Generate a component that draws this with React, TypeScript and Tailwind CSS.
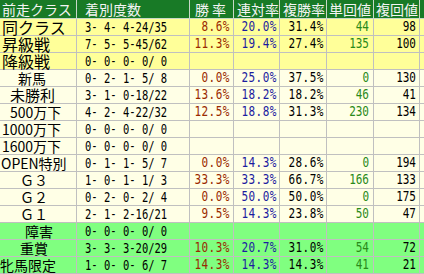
import React from "react";

type Row = {
  label: string;
  labelCls: string;
  bg: string;
  rec: string;
  w?: string;
  r?: string;
  f?: string;
  t?: string;
  fk?: string;
};

const Y = "bg-[#ffff99]";
const C = "bg-[#ffffe6]";
const G = "bg-[#80ff80]";

const rows: Row[] = [
  { label: "同クラス", labelCls: "pl-[2px] text-[16px]", bg: Y, rec: "3- 4- 4-24/35", w: "8.6%", r: "20.0%", f: "31.4%", t: "44", fk: "98" },
  { label: "昇級戦", labelCls: "pl-[2px] text-[16px]", bg: Y, rec: "7- 5- 5-45/62", w: "11.3%", r: "19.4%", f: "27.4%", t: "135", fk: "100" },
  { label: "降級戦", labelCls: "pl-[2px] text-[16px]", bg: Y, rec: "0- 0- 0- 0/ 0" },
  { label: "新馬", labelCls: "pl-[18px] text-[14px]", bg: C, rec: "0- 2- 1- 5/ 8", w: "0.0%", r: "25.0%", f: "37.5%", t: "0", fk: "130" },
  { label: "未勝利", labelCls: "pl-[10px] text-[15px]", bg: C, rec: "3- 1- 0-18/22", w: "13.6%", r: "18.2%", f: "18.2%", t: "46", fk: "41" },
  { label: "500万下", labelCls: "pl-[10px] text-[14px]", bg: C, rec: "4- 2- 4-22/32", w: "12.5%", r: "18.8%", f: "31.3%", t: "230", fk: "134" },
  { label: "1000万下", labelCls: "pl-[2px] text-[14px]", bg: C, rec: "0- 0- 0- 0/ 0" },
  { label: "1600万下", labelCls: "pl-[2px] text-[14px]", bg: C, rec: "0- 0- 0- 0/ 0" },
  { label: "OPEN特別", labelCls: "pl-[1px] text-[14px]", bg: C, rec: "0- 1- 1- 5/ 7", w: "0.0%", r: "14.3%", f: "28.6%", t: "0", fk: "194" },
  { label: "Ｇ３", labelCls: "pl-[20px] text-[14px]", bg: C, rec: "1- 0- 1- 1/ 3", w: "33.3%", r: "33.3%", f: "66.7%", t: "166", fk: "133" },
  { label: "Ｇ２", labelCls: "pl-[20px] text-[14px]", bg: C, rec: "0- 2- 0- 2/ 4", w: "0.0%", r: "50.0%", f: "50.0%", t: "0", fk: "175" },
  { label: "Ｇ１", labelCls: "pl-[20px] text-[14px]", bg: C, rec: "2- 1- 2-16/21", w: "9.5%", r: "14.3%", f: "23.8%", t: "50", fk: "47" },
  { label: "障害", labelCls: "pl-[25px] text-[14px]", bg: G, rec: "0- 0- 0- 0/ 0" },
  { label: "重賞", labelCls: "pl-[20px] text-[14px]", bg: G, rec: "3- 3- 3-20/29", w: "10.3%", r: "20.7%", f: "31.0%", t: "54", fk: "72" },
  { label: "牝馬限定", labelCls: "pl-0 text-[14px]", bg: G, rec: "1- 0- 0- 6/ 7", w: "14.3%", r: "14.3%", f: "14.3%", t: "41", fk: "21" },
];

const jp = "font-['Noto_Sans_CJK_JP',sans-serif]";
const mono = "font-['DejaVu_Sans_Mono',monospace]";

function Num({ v, cls }: { v?: string; cls: string }) {
  if (!v) return null;
  return (
    <span className={`inline-block whitespace-pre ${mono} scale-y-[1.3] leading-[12px] ${cls}`}>{v}</span>
  );
}

const cols = "grid grid-cols-[77px_113px_44px_46px_47px_47px_46px_60px]";
const cell = "border-r border-b border-[#c0c0c0] flex items-center";

export default function App() {
  const headers: { t: string; cls: string }[] = [
    { t: "前走クラス", cls: "pl-[2px]" },
    { t: "着別度数", cls: "pl-[8px]" },
    { t: "勝率", cls: "pl-[5px] tracking-[3px]" },
    { t: "連対率", cls: "pl-[3px]" },
    { t: "複勝率", cls: "pl-[3px]" },
    { t: "単回値", cls: "pl-[2px]" },
    { t: "複回値", cls: "pl-[2px]" },
    { t: "", cls: "" },
  ];
  return (
    <div className="w-[424px] h-[274px] overflow-hidden bg-white">
      <div className={`${cols} w-[480px]`}>
        {headers.map((h, i) => (
          <div
            key={i}
            className={`h-[19px] bg-[#187a26] text-[#f4f4f4] text-[14px] ${jp} border-r border-b border-[#c8d8c8] flex items-center whitespace-nowrap leading-[18px] ${h.cls}`}
          >
            {h.t}
          </div>
        ))}
        {rows.map((r, i) => (
          <React.Fragment key={i}>
            <div className={`h-[17px] ${r.bg} ${cell} ${jp} text-black whitespace-nowrap leading-[16px] ${r.labelCls}`}>{r.label}</div>
            <div className={`h-[17px] ${r.bg} ${cell} pl-[8px] text-black`}>
              <Num v={r.rec} cls="text-[10.5px]" />
            </div>
            <div className={`h-[17px] ${r.bg} ${cell} justify-end pr-[3px] text-[#9a2a00]`}>
              <Num v={r.w} cls="text-[11px] tracking-[0.5px]" />
            </div>
            <div className={`h-[17px] ${r.bg} ${cell} justify-end pr-[2px] text-[#1c1ca0]`}>
              <Num v={r.r} cls="text-[11px] tracking-[0.5px]" />
            </div>
            <div className={`h-[17px] ${r.bg} ${cell} justify-end pr-[2px] text-black`}>
              <Num v={r.f} cls="text-[11px] tracking-[0.5px]" />
            </div>
            <div className={`h-[17px] ${r.bg} ${cell} justify-end pr-[4px] text-[#2a8a1a]`}>
              <Num v={r.t} cls="text-[11px]" />
            </div>
            <div className={`h-[17px] ${r.bg} ${cell} justify-end pr-[3px] text-black`}>
              <Num v={r.fk} cls="text-[11px]" />
            </div>
            <div className={`h-[17px] ${r.bg} ${cell}`}></div>
          </React.Fragment>
        ))}
      </div>
    </div>
  );
}
